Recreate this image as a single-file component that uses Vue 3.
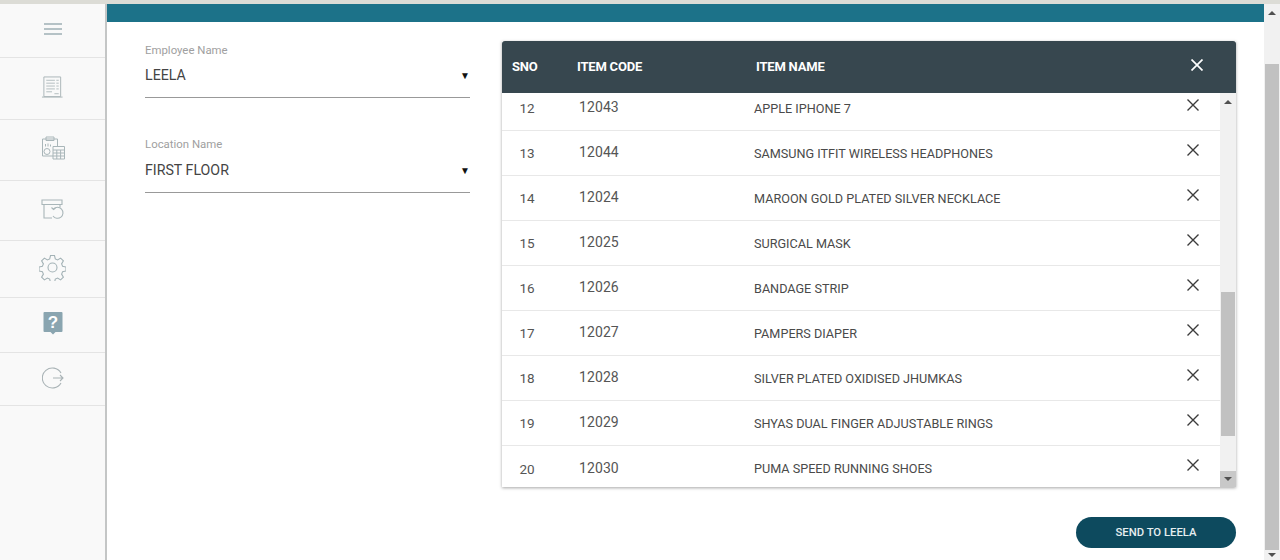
<script setup>
const rows = [
  { sno: 12, code: '12043', name: 'APPLE IPHONE 7' },
  { sno: 13, code: '12044', name: 'SAMSUNG ITFIT WIRELESS HEADPHONES' },
  { sno: 14, code: '12024', name: 'MAROON GOLD PLATED SILVER NECKLACE' },
  { sno: 15, code: '12025', name: 'SURGICAL MASK' },
  { sno: 16, code: '12026', name: 'BANDAGE STRIP' },
  { sno: 17, code: '12027', name: 'PAMPERS DIAPER' },
  { sno: 18, code: '12028', name: 'SILVER PLATED OXIDISED JHUMKAS' },
  { sno: 19, code: '12029', name: 'SHYAS DUAL FINGER ADJUSTABLE RINGS' },
  { sno: 20, code: '12030', name: 'PUMA SPEED RUNNING SHOES' },
]
</script>

<template>
  <div class="page">
    <div class="topline"></div>
    <div class="shell">
      <aside class="side">
        <div class="nav">
          <svg width="18" height="14" viewBox="0 0 18 14" fill="none" stroke="#9fb0b5" stroke-width="1.4"><path d="M0 2h18M0 7h18M0 12h18"/></svg>
        </div>
        <div class="nav">
          <svg width="23" height="24" viewBox="0 0 24 24" fill="none" stroke="#aab6b8" stroke-width="1"><path d="M3 1.500h17.500V22H3z"/><path d="M1 22.500h21.500"/><path d="M5.500 5h9M16 5h2.500M5.500 8h9M16 8h2.500M5.500 11h9M16 11h2.500M5.500 14h9M16 14h2.500M5.500 17h6M14 19h4.500" stroke-width=".9"/></svg>
        </div>
        <div class="nav">
          <svg width="24" height="24" viewBox="0 0 24 24" fill="none" stroke="#a9b6b9" stroke-width="1"><path d="M12 20H1.500V3H16.500V10"/><path d="M5 1h8v3.500H5z"/><path d="M4.500 8v2.500M7 7.500v3M9.500 8.500v2"/><circle cx="6" cy="15.500" r="3"/><path d="M12 10.500h11.500V23H12zM12 14h11.500M15.800 14v9M19.600 14v9M12 17h11.500M12 20h11.500"/></svg>
        </div>
        <div class="nav">
          <svg width="24" height="22" viewBox="0 0 24 22" fill="none" stroke="#a9b6b9" stroke-width="1.100"><path d="M1 1h20v4.500H1zM3 5.500V19h8"/><path d="M19 5.500v3"/><path d="M12.500 10a5.500 5.500 0 1 1-.5 7"/><path d="M10.500 8.500l2 2 2-1.500"/></svg>
        </div>
        <div class="nav">
          <svg width="27" height="27" viewBox="0 0 27 27" fill="none" stroke="#a3b2b6" stroke-width="1.100"><circle cx="13.500" cy="13.500" r="4.500"/><path d="M11.500 1.500h4l.8 3.400 2.300 1 3-1.800 2.800 2.800-1.800 3 1 2.300 3.400.8v4l-3.400.8-1 2.300 1.800 3-2.800 2.800-3-1.800-2.300 1-.8 3.400h-4l-.8-3.400-2.300-1-3 1.800-2.800-2.800 1.800-3-1-2.300-3.400-.8v-4l3.400-.8 1-2.300-1.800-3 2.800-2.800 3 1.800 2.300-1z"/></svg>
        </div>
        <div class="nav">
          <svg width="20" height="24" viewBox="0 0 20 24"><path d="M1.500 1H18.500A1 1 0 0 1 19.500 2V20A1 1 0 0 1 18.500 21H12.500L10 23.500 7.500 21H1.500A1 1 0 0 1 .5 20V2A1 1 0 0 1 1.500 1Z" fill="#8aa5b0"/><text x="10" y="16.500" text-anchor="middle" class="help">?</text></svg>
        </div>
        <div class="nav">
          <svg width="22" height="22" viewBox="0 0 22 22" fill="none" stroke="#a9b3b6" stroke-width="1.100"><path d="M19 6A10 10 0 1 0 19 16"/><path d="M11 11h10M18 8l3 3-3 3"/></svg>
        </div>
      </aside>

      <main class="main">
        <div class="band"></div>
        <div class="content">
          <section class="form">
            <div class="field">
              <div class="label">Employee Name</div>
              <div class="select"><span>LEELA</span><span class="caret">▼</span></div>
            </div>
            <div class="field second">
              <div class="label">Location Name</div>
              <div class="select"><span>FIRST FLOOR</span><span class="caret">▼</span></div>
            </div>
          </section>

          <section class="right">
            <div class="card">
              <div class="thead">
                <span class="h-sno">SNO</span>
                <span class="h-code">ITEM CODE</span>
                <span class="h-name">ITEM NAME</span>
                <svg class="h-x" width="12" height="12" viewBox="0 0 12 12" stroke="#fff" stroke-width="1.700"><path d="M.5.500l11 11M11.500.500l-11 11"/></svg>
              </div>
              <div class="tbody">
                <div class="list">
                  <div v-for="r in rows" :key="r.sno" class="row">
                    <span class="sno">{{ r.sno }}</span>
                    <span class="code">{{ r.code }}</span>
                    <span class="name">{{ r.name }}</span>
                    <svg class="x" width="12" height="12" viewBox="0 0 12 12" stroke="#3c3c3c" stroke-width="1.400"><path d="M.5.500l11 11M11.500.500l-11 11"/></svg>
                  </div>
                </div>
                <div class="bar inner">
                  <div class="arrow up"></div>
                  <div class="track"><div class="thumb"></div></div>
                  <div class="arrow down"></div>
                </div>
              </div>
            </div>
            <div class="actions"><button class="send">SEND TO LEELA</button></div>
          </section>
        </div>
      </main>

      <div class="bar outer">
        <div class="arrow up"></div>
        <div class="track"><div class="thumb"></div></div>
        <div class="arrow down"></div>
      </div>
    </div>
  </div>
</template>

<style>
html, body { margin: 0; padding: 0; background: #fff; overflow: hidden; }
</style>

<style scoped>
.page { width: 1280px; height: 560px; display: flex; flex-direction: column; overflow: hidden; font-family: Roboto, "Liberation Sans", sans-serif; color: #444; }
.topline { height: 4px; flex: none; background: #dcdcd6; }
.shell { flex: 1; display: flex; min-height: 0; }
.side { width: 105px; flex: none; background: #f9f9f9; border-right: 2px solid #c4c6c6; }
.nav { display: flex; align-items: center; justify-content: center; border-bottom: 1px solid #e4e4e4; box-sizing: border-box; padding-bottom: 4px; }
.nav:nth-child(1) { height: 54px; }
.nav:nth-child(2) { height: 62px; }
.nav:nth-child(3) { height: 61px; }
.nav:nth-child(4) { height: 60px; padding-bottom: 2px; }
.nav:nth-child(5) { height: 57px; }
.nav:nth-child(6) { height: 55px; padding-bottom: 5px; }
.nav:nth-child(7) { height: 53px; padding-bottom: 2px; }
.help { font-family: "Liberation Sans", sans-serif; font-size: 17px; font-weight: 700; fill: #fff; }
.main { flex: 1; min-width: 0; display: flex; flex-direction: column; }
.band { height: 18px; flex: none; background: #1c7289; }
.content { flex: 1; display: flex; padding: 19px 28px 0 38px; gap: 32px; }
.form { width: 325px; flex: none; }
.field { height: 95px; }
.label { font-size: 11.400px; line-height: 18px; color: #a0a0a0; }
.select { height: 39px; display: flex; align-items: center; justify-content: space-between; box-sizing: border-box; padding: 0 0 6px 0; border-bottom: 1px solid #999; font-size: 14.200px; color: #444; }
.second .label { margin-top: -1px; }
.second .select { height: 40px; padding-top: 1px; }
.caret { font-size: 10px; color: #111; }
.right { flex: 1; min-width: 0; }
.card { box-shadow: 0 1px 3px rgba(0,0,0,.35); background: #fff; }
.thead { height: 52px; background: #37474f; color: #fff; border-radius: 3px 3px 0 0; display: flex; align-items: center; font-size: 13px; font-weight: 700; letter-spacing: -.2px; box-sizing: border-box; padding: 0 0 1px 10px; }
.h-sno { width: 65px; }
.h-code { width: 179px; }
.h-name { width: 435px; }
.h-x { margin-top: -3px; }
.tbody { display: flex; height: 394px; overflow: hidden; }
.list { flex: 1; min-width: 0; margin-top: -7px; }
.row { height: 45px; flex: none; display: flex; align-items: center; box-sizing: border-box; border-bottom: 1px solid #e8e8e8; font-size: 13px; color: #4a4a4a; }
.row:last-child { border-bottom: 0; }
.sno { width: 50px; text-align: center; font-size: 13.500px; color: #555; }
.code { width: 175px; margin-left: 27px; font-size: 14px; letter-spacing: .1px; margin-top: -2px; color: #555; }
.name { width: 433px; font-size: 12.650px; }
.x { margin-top: -7px; }
.bar { display: flex; flex-direction: column; flex: none; width: 16px; background: #f1f1f1; }
.track { flex: 1; position: relative; }
.thumb { position: absolute; background: #c1c1c1; left: 1px; right: 1px; }
.arrow { height: 16px; display: flex; align-items: center; justify-content: center; flex: none; }
.arrow::before { content: ""; border-left: 4px solid transparent; border-right: 4px solid transparent; }
.arrow.up::before { border-bottom: 4px solid #505050; }
.arrow.down::before { border-top: 4px solid #505050; }
.inner .arrow.up { height: 18px; }
.inner .thumb { top: 181px; height: 144px; }
.inner .arrow.down { background: #c8c8c8; }
.outer .arrow.up { height: 18px; }
.outer .arrow.down { height: 10px; }
.outer .thumb { top: 42px; height: 486px; }
.actions { display: flex; justify-content: flex-end; margin-top: 30px; }
.send { width: 160px; height: 31px; border: 0; border-radius: 16px; background: #0d4a5e; color: #e6eef0; font-family: Roboto, "Liberation Sans", sans-serif; font-size: 11.300px; font-weight: 500; padding: 0; }
</style>
